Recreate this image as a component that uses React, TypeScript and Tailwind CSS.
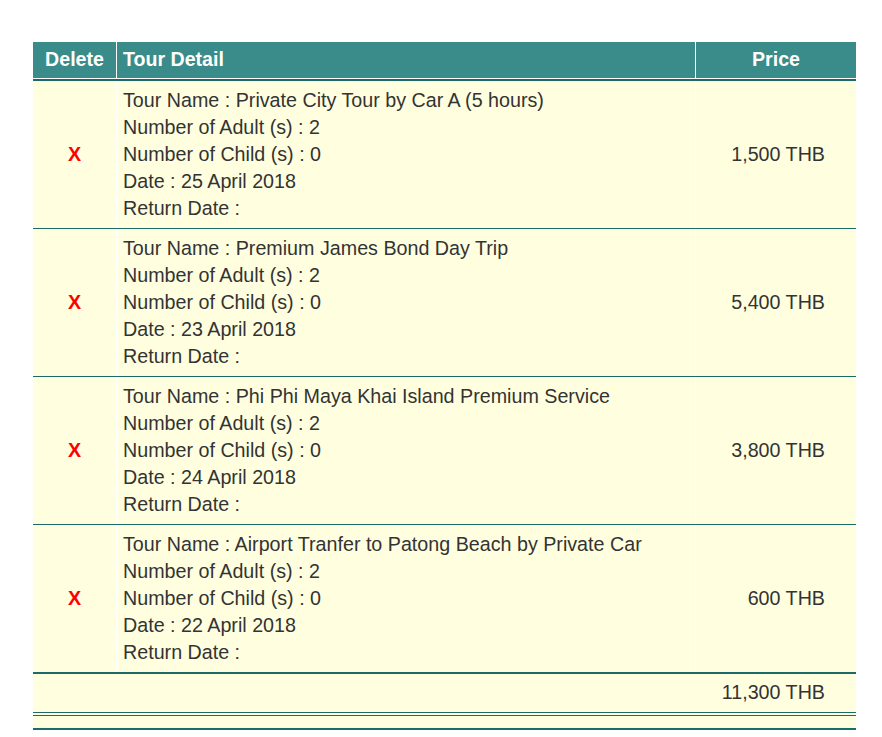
const TOURS = [
  { name: 'Private City Tour by Car A (5 hours)', adult: 2, child: 0, date: '25 April 2018', price: '1,500 THB' },
  { name: 'Premium James Bond Day Trip', adult: 2, child: 0, date: '23 April 2018', price: '5,400 THB' },
  { name: 'Phi Phi Maya Khai Island Premium Service', adult: 2, child: 0, date: '24 April 2018', price: '3,800 THB' },
  { name: 'Airport Tranfer to Patong Beach by Private Car', adult: 2, child: 0, date: '22 April 2018', price: '600 THB' },
]

export default function App() {
  return (
    <div className="min-h-screen bg-white pt-[42px] pl-[33px] font-['Liberation_Sans',Arial,sans-serif]">
      <div className="w-[823px]">
        {/* header */}
        <div className="grid grid-cols-[84px_1fr_160px] bg-[#398c89] text-white font-bold text-[19.6px] h-[36px]">
          <div className="flex items-center justify-center border-r border-white">Delete</div>
          <div className="flex items-center pl-[6px] border-r border-white">Tour Detail</div>
          <div className="flex items-center justify-center">Price</div>
        </div>
        <div className="h-px bg-white" />
        <div className="h-[2px] bg-[#1b6b68]" />

        {TOURS.map((t, i) => (
          <div key={i}>
            {i > 0 && <div className="h-px bg-[#1b6b68]" />}
            <div className="grid grid-cols-[84px_1fr_160px] bg-[#ffffe0] text-[#333] text-[19.7px] leading-[27px] h-[147px]">
              <div className="flex items-center justify-center border-r border-white text-[#ff0000] font-bold">X</div>
              <div className="flex flex-col justify-center pl-[6px] border-r border-white">
                <div>Tour Name : {t.name}</div>
                <div>Number of Adult (s) : {t.adult}</div>
                <div>Number of Child (s) : {t.child}</div>
                <div>Date : {t.date}</div>
                <div>Return Date :</div>
              </div>
              <div className="flex items-center justify-end pr-[31px]">{t.price}</div>
            </div>
          </div>
        ))}

        {/* total */}
        <div className="h-[2px] bg-[#1b6b68]" />
        <div className="flex items-center justify-end pr-[31px] h-[38px] bg-[#ffffe0] text-[#333] text-[19.7px]">
          11,300 THB
        </div>
        <div className="h-px bg-[#1b6b68]" />
        <div className="h-[2px] bg-[#ffffe0]" />
        <div className="h-px bg-[#1b6b68]" />
        <div className="h-[12px] bg-[#ffffe0]" />
        <div className="h-[2px] bg-[#1b6b68]" />
      </div>
    </div>
  )
}
